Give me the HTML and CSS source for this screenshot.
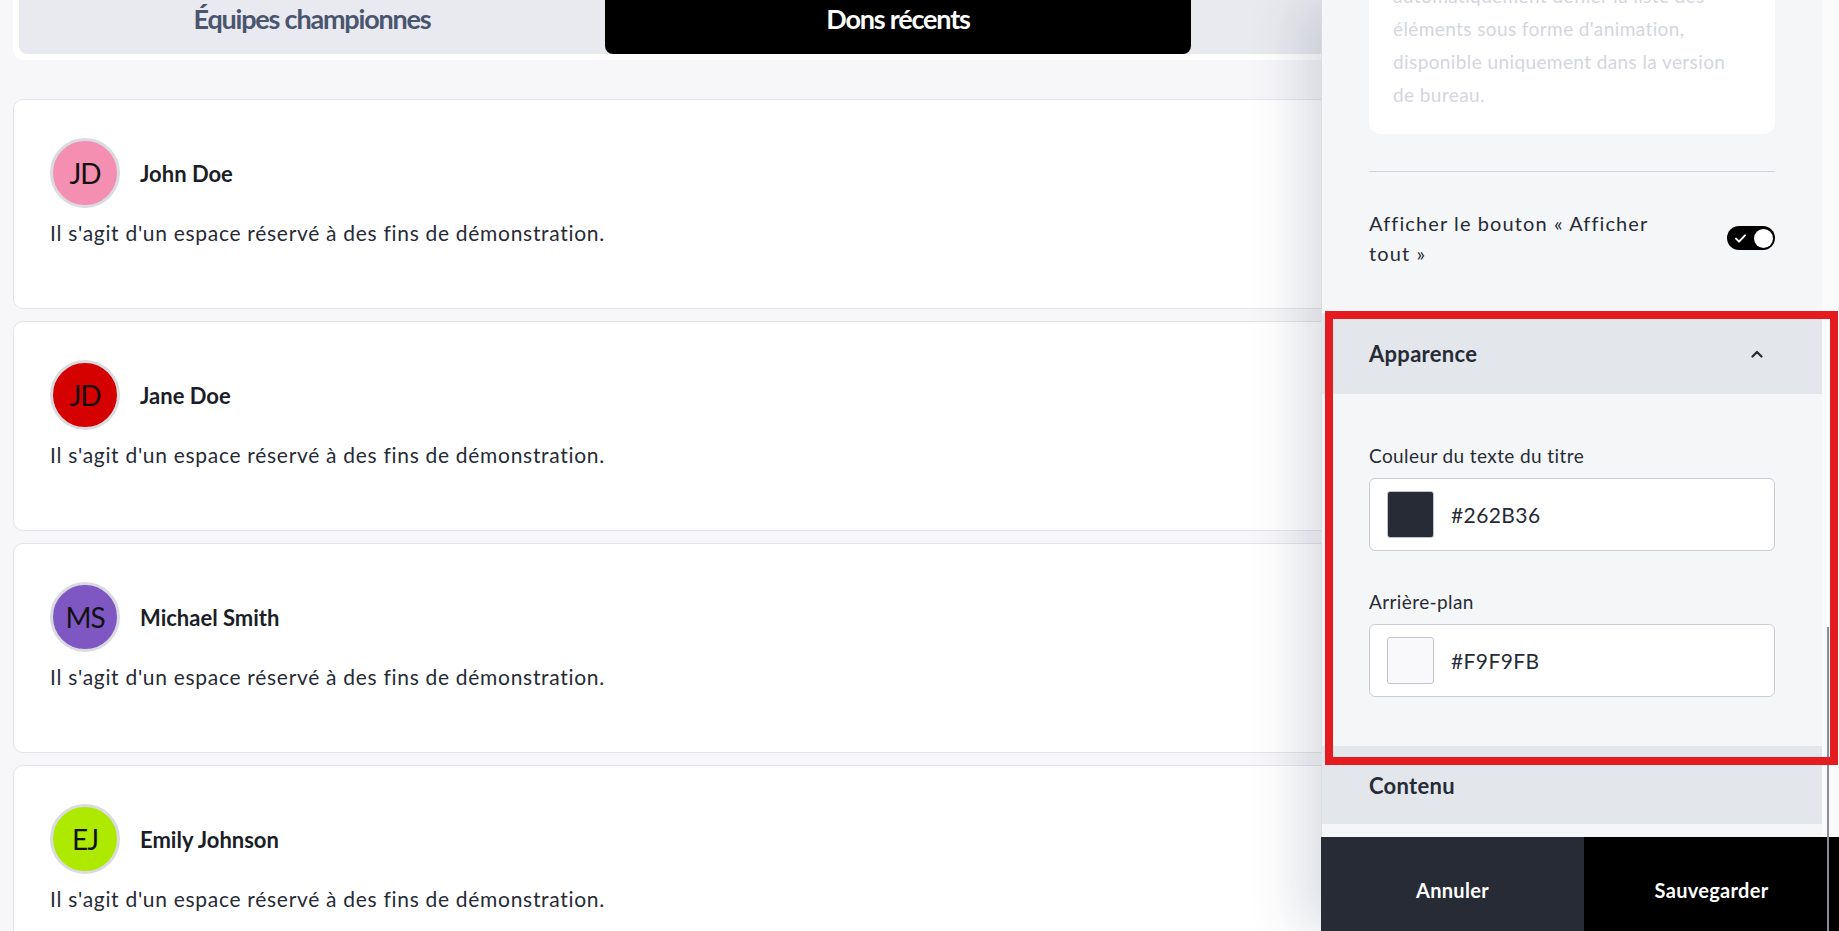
FILE: index.html
```html
<!DOCTYPE html>
<html lang="fr">
  <head>
    <title>Dons récents</title>
    <link rel="stylesheet" href="styles.css">
  </head>
  <body>
    <main class="page">
      <div class="tabs">
        <div class="tab-track">
          <button class="tab">Équipes championnes</button>
          <button class="tab tab-active">Dons récents</button>
        </div>
      </div>

      <section class="donations">
        <div class="donation-card">
          <div class="donor">
            <span class="avatar avatar-pink">JD</span>
            <span class="donor-name">John Doe</span>
          </div>
          <p class="donation-text">Il s'agit d'un espace réservé à des fins de démonstration.</p>
        </div>
        <div class="donation-card">
          <div class="donor">
            <span class="avatar avatar-red">JD</span>
            <span class="donor-name">Jane Doe</span>
          </div>
          <p class="donation-text">Il s'agit d'un espace réservé à des fins de démonstration.</p>
        </div>
        <div class="donation-card">
          <div class="donor">
            <span class="avatar avatar-purple">MS</span>
            <span class="donor-name">Michael Smith</span>
          </div>
          <p class="donation-text">Il s'agit d'un espace réservé à des fins de démonstration.</p>
        </div>
        <div class="donation-card">
          <div class="donor">
            <span class="avatar avatar-lime">EJ</span>
            <span class="donor-name">Emily Johnson</span>
          </div>
          <p class="donation-text">Il s'agit d'un espace réservé à des fins de démonstration.</p>
        </div>
      </section>
    </main>

    <!-- Settings drawer -->
    <aside class="panel">
      <div class="panel-body">
        <div class="panel-top">
          <div class="note">
            automatiquement défiler la liste des<br>
            éléments sous forme d'animation,<br>
            disponible uniquement dans la version<br>
            de bureau.
          </div>
          <hr class="divider">
          <div class="setting-row">
            <span class="setting-label">Afficher le bouton «&nbsp;Afficher tout&nbsp;»</span>
            <span class="toggle">
              <svg class="toggle-check" width="11" height="9" viewBox="0 0 11 9">
                <path d="M1 4.6l3 3L10 1.4" fill="none" stroke="#fff" stroke-width="2" stroke-linecap="round" stroke-linejoin="round"/>
              </svg>
              <span class="toggle-knob"></span>
            </span>
          </div>
        </div>

        <div class="section">
          <div class="section-header">
            <span>Apparence</span>
            <svg width="12" height="8" viewBox="0 0 12 8">
              <path d="M1.5 6.5L6 2l4.5 4.5" fill="none" stroke="#262b36" stroke-width="2.2" stroke-linecap="round" stroke-linejoin="round"/>
            </svg>
          </div>
          <div class="section-body">
            <label class="field-label">Couleur du texte du titre</label>
            <div class="color-field">
              <span class="swatch swatch-dark"></span>
              <span class="color-value">#262B36</span>
            </div>
            <label class="field-label field-label-next">Arrière-plan</label>
            <div class="color-field">
              <span class="swatch swatch-light"></span>
              <span class="color-value">#F9F9FB</span>
            </div>
          </div>
        </div>

        <div class="section">
          <div class="section-header section-header-closed">
            <span>Contenu</span>
          </div>
        </div>
      </div>

      <div class="panel-footer">
        <button class="footer-button cancel-button">Annuler</button>
        <button class="footer-button save-button">Sauvegarder</button>
      </div>

      <div class="scroll-thumb"></div>
      <div class="highlight"></div>
    </aside>
  </body>
</html>
```

FILE: styles.css
```css
body {
  margin: 0;
  background-color: #f7f7f9;
  font-family: Lato, "Noto Sans", sans-serif;
  color: #262b36;
  overflow: hidden;
}

.page {
  margin: -14px 56px 0 13px;
}

/* Tabs */
.tabs {
  background-color: white;
  padding: 6px;
  border-radius: 0 0 10px 10px;
}
.tab-track {
  display: grid;
  grid-template-columns: repeat(3, 1fr);
  background-color: #e9eaef;
  border-radius: 8px;
}
.tab {
  height: 62px;
  border: none;
  background-color: transparent;
  font-family: Lato, sans-serif;
  font-size: 27px;
  font-weight: 700;
  letter-spacing: -1.2px;
  color: #4a5570;
  padding: 0 0 10px;
  cursor: pointer;
}
.tab-active {
  background-color: black;
  color: white;
  border-radius: 8px;
}

/* Donation cards */
.donations {
  margin-top: 39px;
  display: flex;
  flex-direction: column;
  gap: 12px;
}
.donation-card {
  box-sizing: border-box;
  height: 210px;
  background-color: white;
  border: 1px solid #e3e4e9;
  border-radius: 10px;
  padding: 38px 36px;
}
.donor {
  display: flex;
  align-items: center;
  gap: 20px;
}
.avatar {
  box-sizing: border-box;
  width: 70px;
  height: 70px;
  border-radius: 50%;
  border: 3px solid #d9dbe1;
  display: flex;
  align-items: center;
  justify-content: center;
  font-size: 28px;
  color: #111;
  letter-spacing: -1px;
}
.avatar-pink {
  background-color: #f48fb1;
}
.avatar-red {
  background-color: #d50000;
}
.avatar-purple {
  background-color: #7e57c2;
}
.avatar-lime {
  background-color: #aeea00;
}
.donor-name {
  font-size: 22px;
  font-weight: 700;
  color: #1b1e27;
}
.donation-text {
  margin: 12px 0 0;
  font-size: 21px;
  line-height: 26px;
  letter-spacing: 0.7px;
}

/* Settings panel */
.panel {
  position: fixed;
  top: 0;
  right: 0;
  bottom: 0;
  width: 518px;
  display: flex;
  flex-direction: column;
  box-shadow: -20px 0 50px rgba(40, 50, 80, 0.16);
  font-family: Lato, "Noto Sans", sans-serif;
}
.panel-body {
  flex: 1;
  overflow: hidden;
  background-color: #f5f6f8;
  border-left: 1px solid #d9dce4;
  border-right: 17px solid #fbfbfc;
}
.panel-top {
  margin-top: -45px;
  padding: 0 47px 45px;
}
.note {
  background-color: white;
  border-radius: 12px;
  padding: 24px 24px 23px;
  font-size: 19px;
  line-height: 33px;
  letter-spacing: 0.4px;
  color: #d3d6dc;
}
.divider {
  margin: 37px 0 0;
  border: none;
  border-top: 1px solid #d1d5db;
}
.setting-row {
  margin-top: 36px;
  display: flex;
  align-items: center;
  justify-content: space-between;
}
.setting-label {
  max-width: 320px;
  font-size: 20px;
  line-height: 30px;
  letter-spacing: 1.1px;
}
.toggle {
  box-sizing: border-box;
  width: 48px;
  height: 24px;
  padding: 0 2px 0 8px;
  border-radius: 12px;
  background-color: black;
  display: flex;
  align-items: center;
  justify-content: space-between;
}
.toggle-knob {
  width: 19px;
  height: 19px;
  border-radius: 50%;
  background-color: white;
}

.section-header {
  height: 81px;
  padding: 0 59px 0 47px;
  display: flex;
  align-items: center;
  justify-content: space-between;
  background-color: #e3e6eb;
  font-size: 22px;
  font-weight: 700;
  letter-spacing: 0.3px;
}
.section-header-closed {
  height: 78px;
}
.section-body {
  padding: 49px 47px;
}
.field-label {
  display: block;
  font-size: 19px;
  line-height: 26px;
  letter-spacing: 0.4px;
}
.field-label-next {
  margin-top: 38px;
}
.color-field {
  box-sizing: border-box;
  margin-top: 9px;
  height: 73px;
  background-color: white;
  border: 1px solid #c9ccd4;
  border-radius: 6px;
  padding: 0 17px;
  display: flex;
  align-items: center;
  gap: 17px;
}
.swatch {
  box-sizing: border-box;
  width: 47px;
  height: 47px;
  border-radius: 3px;
  border: 1px solid #c0c4cc;
}
.swatch-dark {
  background-color: #262b36;
}
.swatch-light {
  background-color: #f9f9fb;
}
.color-value {
  font-size: 21px;
  letter-spacing: 0.4px;
}

.panel-footer {
  height: 94px;
  display: grid;
  grid-template-columns: 263px 1fr;
}
.footer-button {
  border: none;
  padding: 12px 0 0;
  color: white;
  font-family: Lato, sans-serif;
  font-size: 20px;
  font-weight: 700;
  letter-spacing: 0.3px;
  cursor: pointer;
}
.cancel-button {
  background-color: #262b36;
}
.save-button {
  background-color: black;
}

/* Overlay scrollbar thumb */
.scroll-thumb {
  position: absolute;
  left: 506px;
  top: 627px;
  bottom: 0;
  width: 2px;
  background-color: #8a8d94;
}

/* Red annotation frame */
.highlight {
  position: absolute;
  left: 4px;
  top: 311px;
  width: 513px;
  height: 454px;
  box-sizing: border-box;
  border: 8px solid #e41b1f;
  pointer-events: none;
}
```
